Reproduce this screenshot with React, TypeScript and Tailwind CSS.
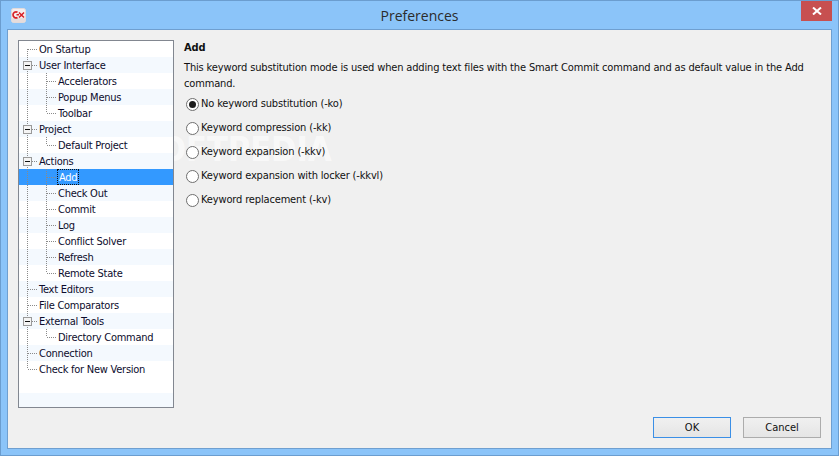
import React from "react";

type Node = {
  label: string;
  child?: boolean;
  open?: boolean;
  last?: boolean;
  selected?: boolean;
};

const nodes: Node[] = [
  { label: "On Startup" },
  { label: "User Interface", open: true },
  { label: "Accelerators", child: true },
  { label: "Popup Menus", child: true },
  { label: "Toolbar", child: true, last: true },
  { label: "Project", open: true },
  { label: "Default Project", child: true, last: true },
  { label: "Actions", open: true },
  { label: "Add", child: true, selected: true },
  { label: "Check Out", child: true },
  { label: "Commit", child: true },
  { label: "Log", child: true },
  { label: "Conflict Solver", child: true },
  { label: "Refresh", child: true },
  { label: "Remote State", child: true, last: true },
  { label: "Text Editors" },
  { label: "File Comparators" },
  { label: "External Tools", open: true },
  { label: "Directory Command", child: true, last: true },
  { label: "Connection" },
  { label: "Check for New Version" },
];

const radios = [
  "No keyword substitution (-ko)",
  "Keyword compression (-kk)",
  "Keyword expansion (-kkv)",
  "Keyword expansion with locker (-kkvl)",
  "Keyword replacement (-kv)",
];

function Guides({ node, index }: { node: Node; index: number }) {
  const first = index === 0;
  const lastRoot = index === nodes.length - 1;
  return (
    <svg width={node.child ? 39 : 20} height={16} className="shrink-0" shapeRendering="crispEdges">
      <g stroke="#8a8a8a" strokeWidth={1} strokeDasharray="1 1" fill="none">
        <line x1={8.5} x2={8.5} y1={first ? 8 : 0} y2={lastRoot ? 8 : 16} />
        {node.child ? (
          <>
            <line x1={27.5} x2={27.5} y1={0} y2={node.last ? 8 : 16} />
            <line x1={28} x2={38} y1={8.5} y2={8.5} />
          </>
        ) : (
          <line x1={9} x2={19} y1={8.5} y2={8.5} />
        )}
      </g>
      {node.open && (
        <>
          <rect x={4.5} y={4.5} width={8} height={8} rx={1} fill="#f4f4f4" stroke="#9a9a9a" />
          <line x1={6} x2={11} y1={8.5} y2={8.5} stroke="#111" />
        </>
      )}
    </svg>
  );
}

function TreeRow({ node, index }: { node: Node; index: number }) {
  const stripe = node.selected
    ? "bg-[#3399ff] text-white"
    : index % 2 === 1
      ? "bg-[#f4f9fe] text-[#0c0c2c]"
      : "bg-white text-[#0c0c2c]";
  return (
    <div className={`flex h-4 items-center tracking-[-0.25px] ${stripe}`}>
      <Guides node={node} index={index} />
      <span
        className={`flex h-4 items-center whitespace-nowrap leading-none ${
          node.selected ? "-ml-px border border-dotted border-[#111] px-px" : ""
        }`}
      >
        {node.label}
      </span>
    </div>
  );
}

function Radio({ label, checked }: { label: string; checked?: boolean }) {
  return (
    <div className="flex h-6 items-center gap-[2px]">
      <span className="ml-[2px] flex h-[13px] w-[13px] items-center justify-center rounded-full border border-[#6f6f6f] bg-white">
        {checked && <span className="h-[7px] w-[7px] rounded-full bg-[#1c1c1c]" />}
      </span>
      <span className="whitespace-nowrap">{label}</span>
    </div>
  );
}

function AppIcon() {
  return (
    <svg width={15} height={15} viewBox="0 0 15 15">
      <rect x={0.5} y={0.5} width={14} height={14} rx={2} fill="#f6eeee" stroke="#e2dada" />
      <rect x={1} y={10} width={13} height={4} rx={1} fill="#e6dcdc" />
      <path d="M6.5 4.2A3 3 0 1 0 6.5 9.4" fill="none" stroke="#d81f26" strokeWidth={1.7} />
      <path d="M5.5 6.8 8 6.8 M8 4.5 13 9.5 M8 9.5 13 4.5" fill="none" stroke="#d81f26" strokeWidth={1.5} />
    </svg>
  );
}

export default function App() {
  return (
    <div
      className="flex h-[456px] w-[839px] flex-col overflow-hidden border border-[#6b9dcf] bg-[#8bc4f9] text-[11px] text-[#111]"
      style={{ fontFamily: '"DejaVu Sans Condensed", "Liberation Sans", sans-serif' }}
    >
      {/* title bar */}
      <div className="relative flex h-[28px] shrink-0 items-start">
        <div className="ml-[10px] mt-[7px]">
          <AppIcon />
        </div>
        <div
          className="absolute inset-x-0 top-[5px] text-center text-[14px] leading-5 text-[#2b2b2b]"
          style={{ fontFamily: '"Open Sans", sans-serif' }}
        >
          Preferences
        </div>
        <div className="ml-auto mr-[6px] flex h-[20px] w-[31px] items-center justify-center bg-[#c75050]">
          <svg width={10} height={8} viewBox="0 0 10 8">
            <path d="M1 0.5 9 7.5 M9 0.5 1 7.5" stroke="#fff" strokeWidth={2} />
          </svg>
        </div>
      </div>

      {/* body */}
      <div className="relative mx-[6px] mb-[6px] flex min-h-0 flex-1 flex-col border border-[#6f9fd0] bg-[#f0f0f0] p-[10px]">
        {/* watermark, sits behind the options */}
        <div className="pointer-events-none absolute left-[130px] top-[99px] text-[34px] font-bold leading-10 text-white/60">
          SOFTPEDIA
        </div>

        <div className="relative flex min-h-0 flex-1 gap-[10px]">
          <div className="h-[368px] w-[156px] shrink-0 overflow-hidden border border-[#828790] bg-white">
            {nodes.map((node, i) => (
              <TreeRow key={node.label} node={node} index={i} />
            ))}
            <div className="h-4 bg-white" />
            <div className="h-4 bg-[#f4f9fe]" />
          </div>

          <div className="flex-1 tracking-[-0.15px]">
            <div className="font-bold leading-4">Add</div>
            <p className="mt-[4px] leading-4">
              This keyword substitution mode is used when adding text files with the Smart Commit command and as default value in the Add command.
            </p>
            <div>
              {radios.map((label, i) => (
                <Radio key={label} label={label} checked={i === 0} />
              ))}
            </div>
          </div>
        </div>

        <div className="flex justify-end gap-3">
          <button className="h-[21px] w-[78px] border border-[#3b8fe6] bg-gradient-to-b from-[#f0f0f0] to-[#e5e5e5] leading-none">
            OK
          </button>
          <button className="h-[21px] w-[78px] border border-[#acacac] bg-gradient-to-b from-[#f0f0f0] to-[#e5e5e5] leading-none">
            Cancel
          </button>
        </div>
      </div>
    </div>
  );
}
